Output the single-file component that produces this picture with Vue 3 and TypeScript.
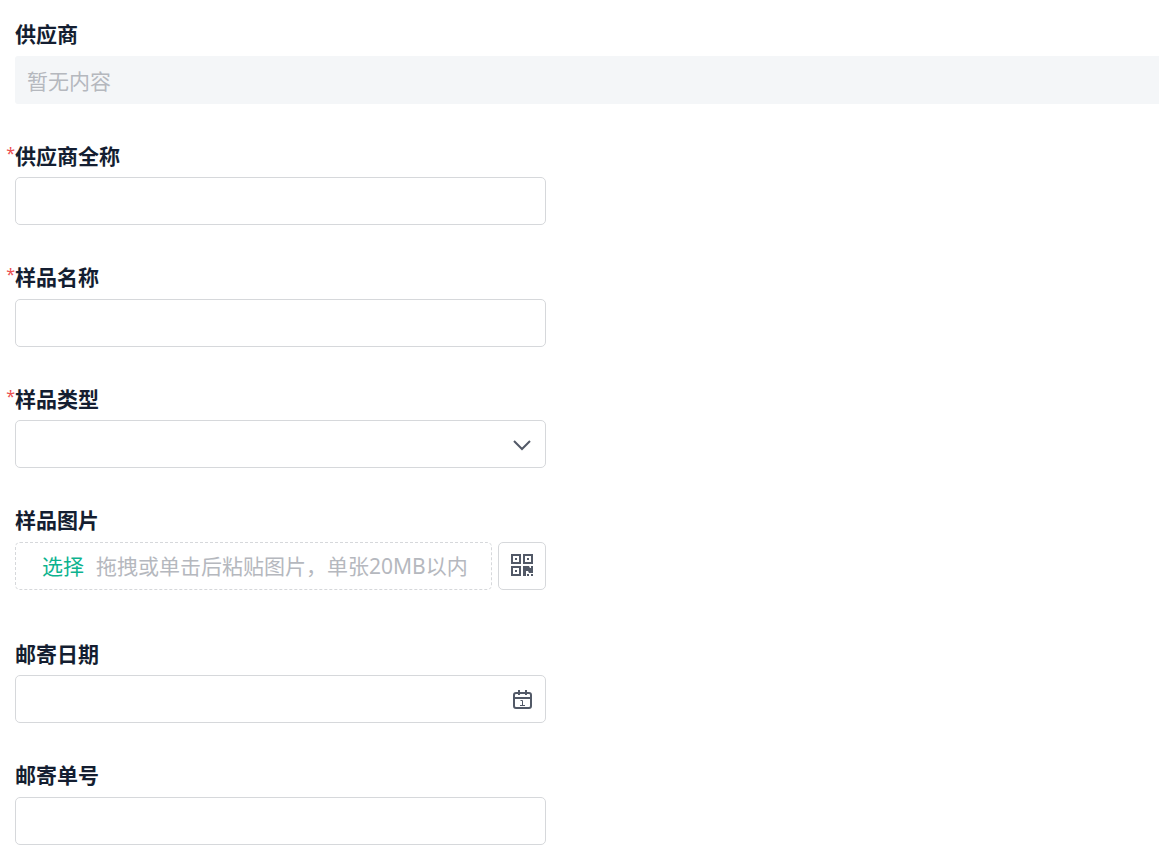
<script setup lang="ts">
import { ref } from 'vue'

type Kind = 'empty' | 'text' | 'select' | 'upload' | 'date'

interface Field {
  id: string
  label: string
  kind: Kind
  required?: boolean
}

const fields: Field[] = [
  { id: 'supplier', label: '供应商', kind: 'empty' },
  { id: 'supplier-name', label: '供应商全称', kind: 'text', required: true },
  { id: 'sample-name', label: '样品名称', kind: 'text', required: true },
  { id: 'sample-type', label: '样品类型', kind: 'select', required: true },
  { id: 'sample-image', label: '样品图片', kind: 'upload' },
  { id: 'mail-date', label: '邮寄日期', kind: 'date' },
  { id: 'mail-number', label: '邮寄单号', kind: 'text' },
]

const values = ref<Record<string, string>>({})
</script>

<template>
  <form class="form" @submit.prevent>
    <div v-for="field in fields" :key="field.id" class="field" :class="`field-${field.kind}`">
      <label class="label" :for="field.id">
        <span v-if="field.required" class="required">*</span>{{ field.label }}
      </label>

      <input
        v-if="field.kind === 'empty'"
        :id="field.id"
        class="control blank"
        type="text"
        placeholder="暂无内容"
        readonly
      />

      <div v-else-if="field.kind === 'select'" class="wrap">
        <select :id="field.id" v-model="values[field.id]" class="control" required></select>
        <svg class="icon" viewBox="0 0 24 24" aria-hidden="true">
          <path d="M4 9l8 8 8-8" fill="none" stroke="#525967" stroke-width="2" />
        </svg>
      </div>

      <div v-else-if="field.kind === 'upload'" class="upload">
        <button :id="field.id" class="drop" type="button">
          <span class="pick">选择</span>
          <span>拖拽或单击后粘贴图片，单张20MB以内</span>
        </button>
        <button class="qr" type="button" aria-label="二维码">
          <svg width="22" height="22" viewBox="0 0 22 22" fill="#525967" aria-hidden="true">
            <path
              fill-rule="evenodd"
              d="M0 0h10v10H0zM2 2v6h6V2zM12 0h10v10H12zM14 2v6h6V2zM0 12h10v10H0zM2 14v6h6v-6z"
            />
            <path d="M4 4h2v2H4zM16 4h2v2h-2zM4 16h2v2H4z" />
            <path d="M12 12h6l1 2h1v-2h2v7h-4l-1-2h-2v5h-3zM16 20h2v2h-2zM20 20h2v2h-2z" />
          </svg>
        </button>
      </div>

      <div v-else-if="field.kind === 'date'" class="wrap">
        <input :id="field.id" v-model="values[field.id]" class="control" type="text" />
        <svg class="icon" viewBox="0 0 24 24" fill="none" stroke="#525967" aria-hidden="true">
          <rect x="4" y="6" width="17" height="15" rx="2" stroke-width="2" />
          <path d="M4 11h17M9 3v5M16 3v5" stroke-width="2" />
          <path d="M10.5 13.5h2v5M10 18.5h5" stroke-width="1" />
        </svg>
      </div>

      <input v-else :id="field.id" v-model="values[field.id]" class="control" type="text" />
    </div>
  </form>
</template>

<style>
body {
  margin: 0;
  background: #fff;
}
</style>

<style scoped>
.form {
  display: flex;
  flex-direction: column;
  gap: 37px;
  padding: 19px 0 18px 15px;
  font-family: "Noto Sans", "Noto Sans CJK SC", sans-serif;
  font-size: 21px;
  line-height: 1.5;
  color: #141e31;
}

.field {
  display: flex;
  flex-direction: column;
  align-items: flex-start;
  gap: 5px;
  width: 100%;
  max-width: 531px;
}

.field-empty {
  max-width: none;
}

.field-upload {
  margin-bottom: 12px;
}

.label {
  position: relative;
  font-weight: 700;
}

.required {
  position: absolute;
  right: 100%;
  font-weight: 400;
  font-size: 16px;
  color: #eb5050;
}

.control {
  display: block;
  box-sizing: border-box;
  width: 100%;
  height: 48px;
  margin: 0;
  padding: 2px 12px 0;
  border: 1px solid #d6d8db;
  border-radius: 5px;
  outline: none;
  background: #fff;
  color: inherit;
  font: inherit;
  appearance: none;
}

.control:focus {
  border-color: #0db38f;
}

.blank {
  border: 0;
  border-radius: 3px 0 0 3px;
  background: #f4f6f8;
}

.blank::placeholder {
  color: #b5b8be;
  opacity: 1;
}

.wrap {
  position: relative;
  width: 100%;
}

.icon {
  position: absolute;
  top: 12px;
  right: 12px;
  width: 24px;
  height: 24px;
  pointer-events: none;
}

.upload {
  display: flex;
  gap: 6px;
  width: 100%;
}

.drop,
.qr {
  display: flex;
  align-items: center;
  box-sizing: border-box;
  height: 48px;
  margin: 0;
  border: 1px solid #d6d8db;
  border-radius: 5px;
  background: #fff;
  font: inherit;
  cursor: pointer;
}

.drop {
  flex: 1;
  gap: 12px;
  padding: 2px 0 0 26px;
  border-style: dashed;
  color: #b5b8be;
}

.pick {
  color: #0db38f;
}

.qr {
  justify-content: center;
  width: 48px;
  padding: 0 0 2px;
}
</style>
